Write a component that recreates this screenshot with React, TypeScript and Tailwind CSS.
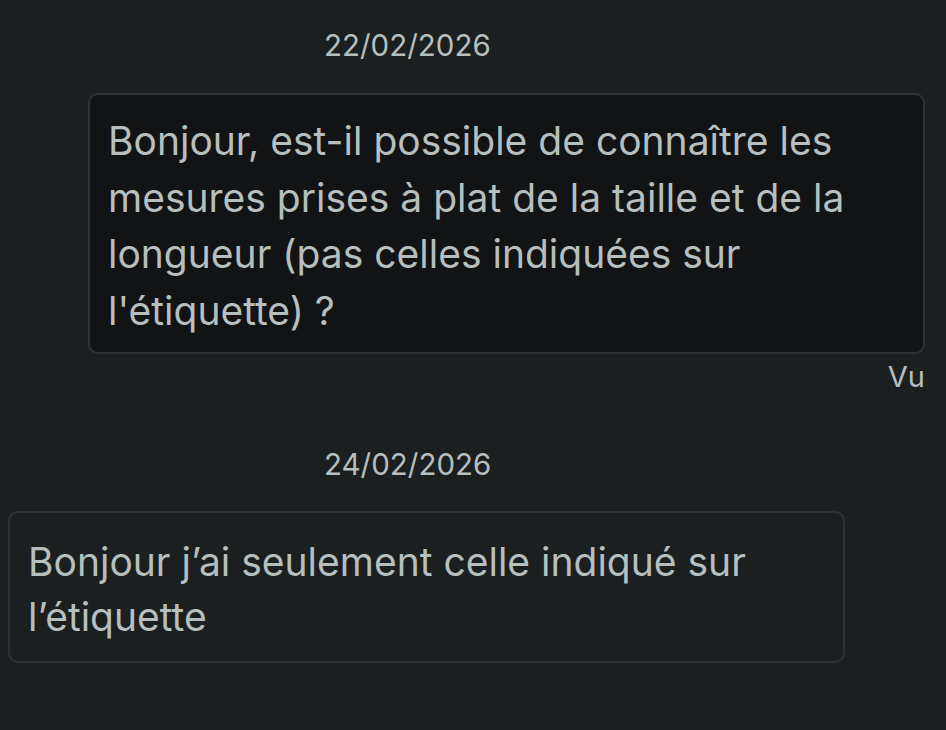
export default function App() {
  return (
    <div className="min-h-[730px] w-[946px] bg-[#1b1f20] font-['Inter',sans-serif] text-[#b6bebe]">
      <div className="flex flex-col">
        <div className="pt-[26px] pl-[324px] text-[29.5px] leading-[38px]">22/02/2026</div>
        <div className="mt-[29px] ml-[88px] mr-[21px] rounded-[10px] border-2 border-[#2e3234] bg-[#111314] px-[18px] pt-[18px] pb-[12px] text-[39px] leading-[56.7px]">
          Bonjour, est-il possible de connaître les mesures prises à plat de la taille et de la longueur (pas celles indiquées sur l'étiquette) ?
        </div>
        <div className="mr-[21px] mt-[4px] text-right text-[29px] leading-[38px]">Vu</div>
        <div className="mt-[49px] pl-[324px] text-[29.5px] leading-[38px]">24/02/2026</div>
        <div className="mt-[28px] ml-[8px] mr-[101px] rounded-[10px] border-2 border-[#2e3234] px-[18px] pt-[21px] pb-[16px] text-[39px] leading-[55.5px]">
          Bonjour j’ai seulement celle indiqué sur l’étiquette
        </div>
      </div>
    </div>
  );
}
